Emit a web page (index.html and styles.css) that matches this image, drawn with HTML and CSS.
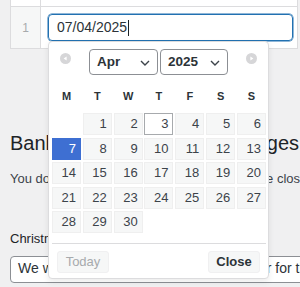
FILE: index.html
```html
<!DOCTYPE html>
<html>
<head>
<meta charset="utf-8">
<link rel="stylesheet" href="styles.css">
</head>
<body>
<div class="table">
  <div class="row prev"><div class="num"></div><div class="val"></div></div>
  <div class="row main"><div class="num">1</div><div class="val"><div class="field focus">07/04/2025<span class="caret"></span></div></div></div>
</div>
<section class="content">
  <h2 class="title">Bank Holiday Closure Messages</h2>
  <p class="desc">You do not need to enter any message for the closure days.</p>
  <div class="label">Christmas</div>
  <div class="field2">We will close for Christmas, please order for the new year early.</div>
</section>

<div class="dp">
  <div class="dp-head">
    <span class="nav prev-btn"><svg width="11" height="11" viewBox="0 0 11 11"><circle cx="5.5" cy="5.5" r="5.5" fill="#d6d6d8"/><polygon points="3.6,5.5 6.6,3.4 6.6,7.6" fill="#fff"/></svg></span>
    <div class="sel month">Apr<svg class="chev" width="10" height="6" viewBox="0 0 10 6"><polyline points="1,1 5,5 9,1" fill="none" stroke="#3c434a" stroke-width="1.4"/></svg></div>
    <div class="sel year">2025<svg class="chev" width="10" height="6" viewBox="0 0 10 6"><polyline points="1,1 5,5 9,1" fill="none" stroke="#3c434a" stroke-width="1.4"/></svg></div>
    <span class="nav next-btn"><svg width="11" height="11" viewBox="0 0 11 11"><circle cx="5.5" cy="5.5" r="5.5" fill="#d6d6d8"/><polygon points="7.4,5.5 4.4,3.4 4.4,7.6" fill="#fff"/></svg></span>
  </div>
  <div class="dp-names"><span>M</span><span>T</span><span>W</span><span>T</span><span>F</span><span>S</span><span>S</span></div>
  <div class="dp-grid">
    <span class="empty"></span>
    <span class="d">1</span><span class="d">2</span><span class="d today">3</span><span class="d">4</span><span class="d">5</span><span class="d">6</span>
    <span class="d active">7</span><span class="d">8</span><span class="d">9</span><span class="d">10</span><span class="d">11</span><span class="d">12</span><span class="d">13</span>
    <span class="d">14</span><span class="d">15</span><span class="d">16</span><span class="d">17</span><span class="d">18</span><span class="d">19</span><span class="d">20</span>
    <span class="d">21</span><span class="d">22</span><span class="d">23</span><span class="d">24</span><span class="d">25</span><span class="d">26</span><span class="d">27</span>
    <span class="d">28</span><span class="d">29</span><span class="d">30</span>
  </div>
  <div class="dp-foot">
    <span class="btn today-btn">Today</span>
    <span class="btn close-btn">Close</span>
  </div>
</div>
</body>
</html>
```
FILE: styles.css
```css
* { box-sizing: border-box; }
html, body { margin: 0; }
body {
  width: 300px;
  height: 287px;
  overflow: hidden;
  position: relative;
  background: #f0f0f1;
  font-family: "Liberation Sans", Arial, sans-serif;
  color: #1d2327;
}
.table {
  margin-left: 10px;
  width: 288px;
  background: #fff;
  border-left: 1px solid #dcdcde;
  border-right: 1px solid #dcdcde;
}
.row {
  display: flex;
  border-bottom: 1px solid #dcdcde;
}
.prev { height: 7px; }
.num {
  width: 30px;
  flex: none;
  border-right: 1px solid #dcdcde;
  background: #f6f7f7;
  display: flex;
  align-items: center;
  justify-content: center;
  font-size: 12px;
  color: #a7aaad;
}
.prev .num { background: #fff; }
.val {
  flex: 1;
  padding: 7px 4px 7px 7px;
}
.prev .val { padding: 0; }
.field {
  height: 27px;
  border: 1px solid #2271b1;
  box-shadow: 0 0 0 0.5px #2271b1;
  border-radius: 4px;
  padding: 0 8px;
  font-size: 14px;
  line-height: 25px;
  color: #2c3338;
  display: flex;
  align-items: center;
}
.caret {
  display: inline-block;
  width: 1px;
  height: 16px;
  background: #1d2327;
  margin-left: 1px;
}
.content {
  padding-left: 10px;
}
.title {
  margin: 81px 0 0;
  font-size: 20px;
  line-height: 26px;
  font-weight: 400;
  white-space: nowrap;
  color: #1d2327;
}
.desc {
  margin: 13px 0 0;
  font-size: 13px;
  line-height: 19.5px;
  white-space: nowrap;
  color: #3c434a;
}
.label {
  margin-top: 40px;
  font-size: 13px;
  line-height: 19.5px;
  font-weight: 400;
  color: #1d2327;
}
.field2 {
  margin-top: 8px;
  width: 340px;
  height: 27px;
  border: 1px solid #8c8f94;
  border-radius: 4px;
  background: #fff;
  padding: 0 7px;
  font-size: 14px;
  line-height: 23px;
  white-space: nowrap;
  color: #2c3338;
}

/* datepicker */
.dp {
  position: absolute;
  left: 48px;
  top: 41px;
  width: 221px;
  background: #fff;
  border: 1px solid #dcdcde;
  border-radius: 4px;
  box-shadow: 0 3px 6px rgba(0, 0, 0, 0.08);
  padding: 0 2px 5px 3px;
}
.dp-head {
  height: 39px;
  padding-top: 7px;
  display: flex;
  align-items: flex-start;
}
.nav {
  display: block;
  width: 11px;
  height: 11px;
  margin-top: 4px;
}
.nav svg { display: block; }
.prev-btn { margin-left: 8px; margin-right: 18px; }
.next-btn { margin-left: 18px; }
.sel {
  position: relative;
  height: 26px;
  border: 1px solid #8c8f94;
  border-radius: 4px;
  background: #fff;
  font-size: 13.5px;
  font-weight: 700;
  line-height: 24px;
  color: #2c3338;
  padding-left: 7px;
}
.month { width: 69px; margin-right: 2px; }
.year { width: 68px; }
.chev {
  position: absolute;
  right: 7px;
  top: 10px;
}
.dp-names {
  display: grid;
  grid-template-columns: repeat(7, 29px);
  column-gap: 1.83px;
  height: 30px;
  line-height: 30px;
  font-size: 11px;
  font-weight: 700;
  text-align: center;
  color: #2c3338;
}
.dp-grid {
  margin-top: 2px;
  display: grid;
  grid-template-columns: repeat(7, 29px);
  grid-auto-rows: 22px;
  column-gap: 1.83px;
  row-gap: 2.5px;
}
.d {
  background: #f6f7f7;
  border: 1px solid #efefef;
  text-align: right;
  padding-right: 4px;
  font-size: 13px;
  line-height: 19px;
  color: #3c434a;
}
.d.today {
  background: #fff;
  border-color: #a7aaad;
}
.d.active {
  background: #3e6fd2;
  border-color: #3e6fd2;
  color: #fff;
}
.dp-foot {
  margin-top: 10px;
  border-top: 1px solid #dcdcde;
  padding: 7px 6px 0 5px;
  display: flex;
  justify-content: space-between;
}
.btn {
  display: block;
  width: 52px;
  height: 22px;
  background: #f6f7f7;
  border: 1px solid #f0f0f1;
  border-radius: 3px;
  font-size: 13px;
  line-height: 20px;
  text-align: center;
}
.today-btn { color: #a7aaad; }
.close-btn { color: #2c3338; font-weight: 700; }
```
